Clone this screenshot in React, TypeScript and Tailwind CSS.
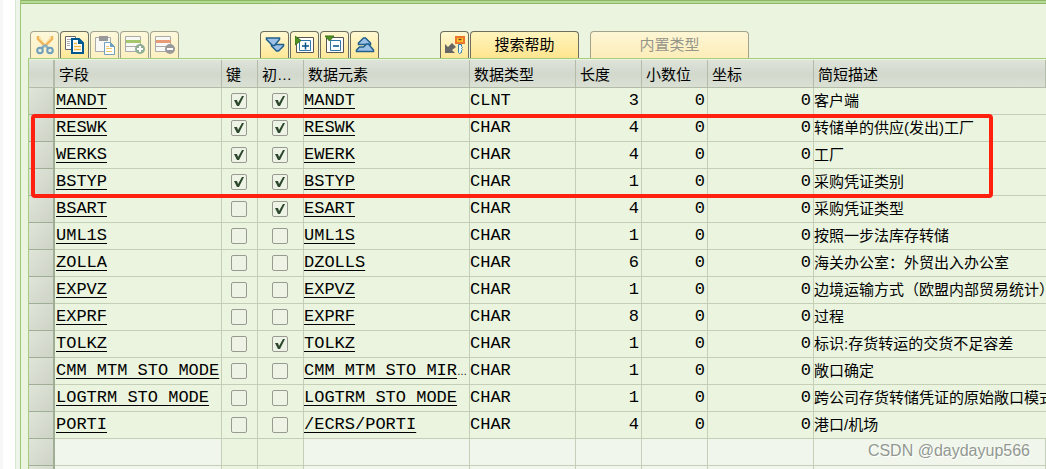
import type { ReactNode } from 'react'

interface Field {
    name: string
    isKey: boolean
    initial: boolean
    element: string
    truncated?: boolean
    type: string
    length: number
    description: string
}

const fields: Field[] = [
    { name: 'MANDT', isKey: true, initial: true, element: 'MANDT', type: 'CLNT', length: 3, description: '客户端' },
    { name: 'RESWK', isKey: true, initial: true, element: 'RESWK', type: 'CHAR', length: 4, description: '转储单的供应(发出)工厂' },
    { name: 'WERKS', isKey: true, initial: true, element: 'EWERK', type: 'CHAR', length: 4, description: '工厂' },
    { name: 'BSTYP', isKey: true, initial: true, element: 'BSTYP', type: 'CHAR', length: 1, description: '采购凭证类别' },
    { name: 'BSART', isKey: false, initial: true, element: 'ESART', type: 'CHAR', length: 4, description: '采购凭证类型' },
    { name: 'UML1S', isKey: false, initial: false, element: 'UML1S', type: 'CHAR', length: 1, description: '按照一步法库存转储' },
    { name: 'ZOLLA', isKey: false, initial: false, element: 'DZOLLS', type: 'CHAR', length: 6, description: '海关办公室：外贸出入办公室' },
    { name: 'EXPVZ', isKey: false, initial: false, element: 'EXPVZ', type: 'CHAR', length: 1, description: '边境运输方式（欧盟内部贸易统计）' },
    { name: 'EXPRF', isKey: false, initial: false, element: 'EXPRF', type: 'CHAR', length: 8, description: '过程' },
    { name: 'TOLKZ', isKey: false, initial: true, element: 'TOLKZ', type: 'CHAR', length: 1, description: '标识:存货转运的交货不足容差' },
    { name: 'CMM MTM STO MODE', isKey: false, initial: false, element: 'CMM MTM STO MIR', truncated: true, type: 'CHAR', length: 1, description: '敞口确定' },
    { name: 'LOGTRM STO MODE', isKey: false, initial: false, element: 'LOGTRM STO MODE', type: 'CHAR', length: 1, description: '跨公司存货转储凭证的原始敞口模式' },
    { name: 'PORTI', isKey: false, initial: false, element: '/ECRS/PORTI', type: 'CHAR', length: 4, description: '港口/机场' },
]

const headers = ['字段', '键', '初…', '数据元素', '数据类型', '长度', '小数位', '坐标', '简短描述']

function Icon({ children }: { children: ReactNode }) {
    return (
        <svg viewBox="0 0 20 20" className="h-5 w-5 shrink-0" fill="none" aria-hidden="true">
            {children}
        </svg>
    )
}

const CutIcon = () => (
    <Icon>
        <path d="M3 1v3l7 7M17 1v3l-7 7" stroke="#f1b75c" strokeWidth="2.5" />
        <path d="M5 1v2l5 6 5-6V1" stroke="#fbe0a4" />
        <path d="M10 10l-4 4M10 10l4 4" stroke="#8fb0bf" strokeWidth="2.5" />
        <circle cx="5" cy="15.5" r="2.8" fill="#e6ecd9" stroke="#6f9fba" strokeWidth="2" />
        <circle cx="15" cy="15.5" r="2.8" fill="#e6ecd9" stroke="#6f9fba" strokeWidth="2" />
    </Icon>
)

const CopyIcon = () => (
    <Icon>
        <path d="M.5 1.5h10v13H.5z" fill="#fff" stroke="#666" />
        <path d="M2 4.5h4M2 6.5h3M2 8.5h3M2 10.5h3" stroke="#aaa" />
        <path d="M7 4h7l4 4v10H7z" fill="#fff" stroke="#00588f" strokeWidth="2" />
        <path d="M13 4v5h5z" fill="#00588f" />
        <path d="M9 8.5h3M9 11.5h7M9 14.5h7" stroke="#f3bb3d" strokeWidth="1.5" />
    </Icon>
)

const PasteIcon = () => (
    <Icon>
        <path d="M.5 2.5h15v14H.5z" fill="#f8f8f4" stroke="#aaa" />
        <path d="M4 1h9v5H4z" fill="#999" />
        <path d="M9.5 7.5h6l4 4v8h-10z" fill="#fff" stroke="#6fa0bd" />
        <path d="M15 7v5h5z" fill="#6fa0bd" />
        <path d="M11 11.5h3M11 13.5h6M11 16.5h6" stroke="#f3c968" />
    </Icon>
)

const InsertRowIcon = () => (
    <Icon>
        <path d="M.5 1.5h15v15H.5z" fill="#f8f8f4" stroke="#aaa" />
        <path d="M1 11.5h14" stroke="#aaa" />
        <path d="M1 5h15v3H1z" fill="#a6c66d" />
        <circle cx="15" cy="14" r="5" fill="#8fae93" />
        <path d="M15 11v6M12 14h6" stroke="#fff" strokeWidth="2" />
    </Icon>
)

const DeleteRowIcon = () => (
    <Icon>
        <path d="M.5 1.5h15v15H.5z" fill="#f8f8f4" stroke="#aaa" />
        <path d="M1 11.5h14" stroke="#aaa" />
        <path d="M1 5h15v3H1z" fill="#e79b77" />
        <circle cx="15" cy="14" r="5" fill="#999" />
        <path d="M12 14h6" stroke="#fff" strokeWidth="2" />
    </Icon>
)

const ExpandAllIcon = () => (
    <Icon>
        <path d="M6.5 9.5h12v1.5l-5 5h-2l-5-5z" fill="#9cc0e6" stroke="#1f5f8c" strokeWidth="1.5" />
        <path d="M1.500 3h13v1.500l-5 6h-2l-6-6z" fill="#9cc0e6" stroke="#1f5f8c" strokeWidth="1.5" />
    </Icon>
)

const CollapseAllIcon = () => (
    <Icon>
        <path d="M3.500 9.500V8l5-5h2l5 5v1.500z" fill="#9cc0e6" stroke="#1f5f8c" strokeWidth="1.5" />
        <path d="M1.500 16.500V15l3-3h4l3-3h2l5 6v1.500z" fill="#9cc0e6" stroke="#1f5f8c" strokeWidth="1.5" />
    </Icon>
)

const ExpandNodeIcon = () => (
    <Icon>
        <path d="M1.5 2.5h17v15h-17z" fill="#fff" stroke="#555" />
        <path d="M4.5 5.5h11v10h-11z" fill="#fff" stroke="#2d76a8" />
        <path d="M10.5 7.5v7M7 11h7" stroke="#005187" strokeWidth="1.5" />
        <path d="M0 1l6 4.5L0 10z" fill="#4f9020" stroke="#39741a" />
    </Icon>
)

const CollapseNodeIcon = () => (
    <Icon>
        <path d="M1.5 2.5h17v15h-17z" fill="#fff" stroke="#555" />
        <path d="M5.5 5.5h10v10h-10z" fill="#fff" stroke="#2d76a8" />
        <path d="M8 11h6" stroke="#005187" strokeWidth="1.5" />
        <path d="M0 1h9L4.5 6z" fill="#4f9020" stroke="#39741a" />
    </Icon>
)

const KeyIcon = () => (
    <Icon>
        <path d="M11 2h8v6h-8z" fill="#ffc62a" stroke="#ec762a" strokeWidth="2" />
        <path d="M13.5 4.5h3" stroke="#7b3a1d" strokeWidth="1.5" />
        <path d="M13.5 9.5h3v2l1 1-1 1 1 1-1 1v2l-2 1-1-1z" fill="#e9f7ff" stroke="#397da5" />
        <path d="M0 9l3 3 4-4 4 4-4 3 3 3H0z" fill="#666" />
    </Icon>
)

interface ToolButtonProps {
    label: string
    disabled?: boolean
    children: ReactNode
}

function ToolButton({ label, disabled, children }: ToolButtonProps) {
    return (
        <button
            type="button"
            aria-label={label}
            disabled={disabled}
            className="flex h-[27px] w-[29px] shrink-0 items-center justify-center rounded-t-sm border border-b-0 border-[#6f6d5d] bg-linear-to-b from-[#fff8d2] to-[#ffe795] disabled:border-[#a5a28b] disabled:from-[#fdf8dc] disabled:to-[#fdf0c0]"
        >
            {children}
        </button>
    )
}

function Tick({ label, checked }: { label: string; checked: boolean }) {
    return (
        <span className="relative mx-auto block h-4 w-4">
            <input
                type="checkbox"
                aria-label={label}
                defaultChecked={checked}
                className="peer block h-4 w-4 appearance-none rounded-xs border border-[#999b93] bg-[#edf4e5]"
            />
            <svg viewBox="0 0 16 16" className="pointer-events-none absolute inset-0 hidden h-4 w-4 peer-checked:block" aria-hidden="true">
                <path d="M3 7h3l1 3 4-7h2L8 13H6z" fill="#2e482e" />
            </svg>
        </span>
    )
}

const headCell = 'h-7 overflow-hidden border-r border-b border-[#b3bca8] px-1 pt-0.5 pb-0 text-left leading-6 font-normal whitespace-nowrap'
const cell = 'h-[27px] overflow-hidden border-r border-b border-[#c5ceb7] py-0 pr-0.5 whitespace-nowrap'
const mono = "font-['Liberation_Mono',monospace] text-[17px] leading-6"
const link = 'underline decoration-1 underline-offset-3'

function RowSelector() {
    return (
        <td className="h-[27px] border-r-2 border-b border-[#9fae94] bg-linear-to-br from-[#e0e5da] to-[#cdd3c5] p-0" />
    )
}

export default function App() {
    return (
        <div className="relative flex h-screen overflow-hidden bg-white font-['Liberation_Sans','Noto_Sans_CJK_SC',sans-serif] text-[15px] text-black">
            <div className="w-[3px] shrink-0 bg-[#f7f7f7]" />
            <div className="ml-3 w-[5px] shrink-0 border-l border-[#d5e6cf] bg-[#edf4e9]" />
            <main className="min-w-0 flex-1 border-l border-[#9cc576] bg-[#eaf4df]">
                <div className="h-1 border-y border-[#8bb866] bg-[#b9d996]">
                    <div className="ml-[177px] h-px w-[76px] bg-[#aedd8a]" />
                </div>
                <div className="flex h-[54px] items-end pl-[9px]">
                    <div className="flex gap-px">
                        <ToolButton label="剪切" disabled><CutIcon /></ToolButton>
                        <ToolButton label="复制"><CopyIcon /></ToolButton>
                        <ToolButton label="粘贴" disabled><PasteIcon /></ToolButton>
                        <ToolButton label="插入行" disabled><InsertRowIcon /></ToolButton>
                        <ToolButton label="删除行" disabled><DeleteRowIcon /></ToolButton>
                    </div>
                    <div className="ml-[81px] flex gap-px">
                        <ToolButton label="全部展开"><ExpandAllIcon /></ToolButton>
                        <ToolButton label="展开"><ExpandNodeIcon /></ToolButton>
                        <ToolButton label="折叠"><CollapseNodeIcon /></ToolButton>
                        <ToolButton label="全部折叠"><CollapseAllIcon /></ToolButton>
                    </div>
                    <div className="ml-[61px] flex gap-px">
                        <ToolButton label="检查表"><KeyIcon /></ToolButton>
                        <button type="button" className="h-[27px] w-[109px] rounded-t-sm border border-b-0 border-[#6f6d5d] bg-linear-to-b from-[#fff4bd] to-[#ffe58e]">
                            搜索帮助
                        </button>
                    </div>
                    <button type="button" disabled className="ml-[11px] h-[27px] w-[159px] rounded-t-sm border border-b-0 border-[#a5a28b] bg-linear-to-b from-[#fdf6d5] to-[#fcedb8] text-[#96958a]">
                        内置类型
                    </button>
                </div>

                <div className="relative ml-[7px] border-t border-l border-[#a6cc80] pt-px">
                    <table className="w-full table-fixed border-separate border-spacing-0">
                        <colgroup>
                            <col className="w-[26px]" />
                            <col className="w-[167px]" />
                            <col className="w-9" />
                            <col className="w-[46px]" />
                            <col className="w-[166px]" />
                            <col className="w-[106px]" />
                            <col className="w-[66px]" />
                            <col className="w-[66px]" />
                            <col className="w-[106px]" />
                            <col />
                        </colgroup>
                        <thead>
                            <tr className="bg-linear-to-b from-[#dee4da] via-[#d2d8cc] to-[#dbe1d5]">
                                <td className="border-r-2 border-b border-[#b3bca8]" />
                                {headers.map((title) => (
                                    <th key={title} scope="col" className={headCell}>{title}</th>
                                ))}
                            </tr>
                        </thead>
                        <tbody>
                            {fields.map((field) => (
                                <tr key={field.name}>
                                    <RowSelector />
                                    <td className={`${cell} ${mono} pl-px`}>
                                        <a href="#" className={link}>{field.name}</a>
                                    </td>
                                    <td className={cell}><Tick label={`${field.name} 键`} checked={field.isKey} /></td>
                                    <td className={cell}><Tick label={`${field.name} 初始值`} checked={field.initial} /></td>
                                    <td className={`${cell} ${mono}`}>
                                        <a href="#" className={link}>{field.element}</a>
                                        {field.truncated && <span className="font-['Liberation_Sans',sans-serif] text-[10px]">…</span>}
                                    </td>
                                    <td className={`${cell} ${mono}`}>{field.type}</td>
                                    <td className={`${cell} ${mono} text-right`}>{field.length}</td>
                                    <td className={`${cell} ${mono} text-right`}>0</td>
                                    <td className={`${cell} ${mono} text-right`}>0</td>
                                    <td className="h-[27px] overflow-hidden border-b border-[#c5ceb7] p-0 whitespace-nowrap">{field.description}</td>
                                </tr>
                            ))}
                            {[0, 1].map((row) => (
                                <tr key={row} className="bg-[#f0f6eb]">
                                    <RowSelector />
                                    <td className={cell} />
                                    <td className={`${cell} bg-[#eaf4df]`} />
                                    <td className={`${cell} bg-[#eaf4df]`} />
                                    <td className={cell} />
                                    <td className={cell} />
                                    <td className={cell} />
                                    <td className={cell} />
                                    <td className={cell} />
                                    <td className={cell} />
                                </tr>
                            ))}
                        </tbody>
                    </table>
                    {/* Marker around the three key fields after the client */}
                    <div className="pointer-events-none absolute top-[55px] left-[2px] h-[84px] w-[962px] rounded-sm border-4 border-[#ff2010]" />
                </div>
            </main>
            <p className="absolute right-4 bottom-1.5 text-base leading-6 text-[#929891] text-shadow-[1px_1px_0_#ffffff]">CSDN @daydayup566</p>
        </div>
    )
}
